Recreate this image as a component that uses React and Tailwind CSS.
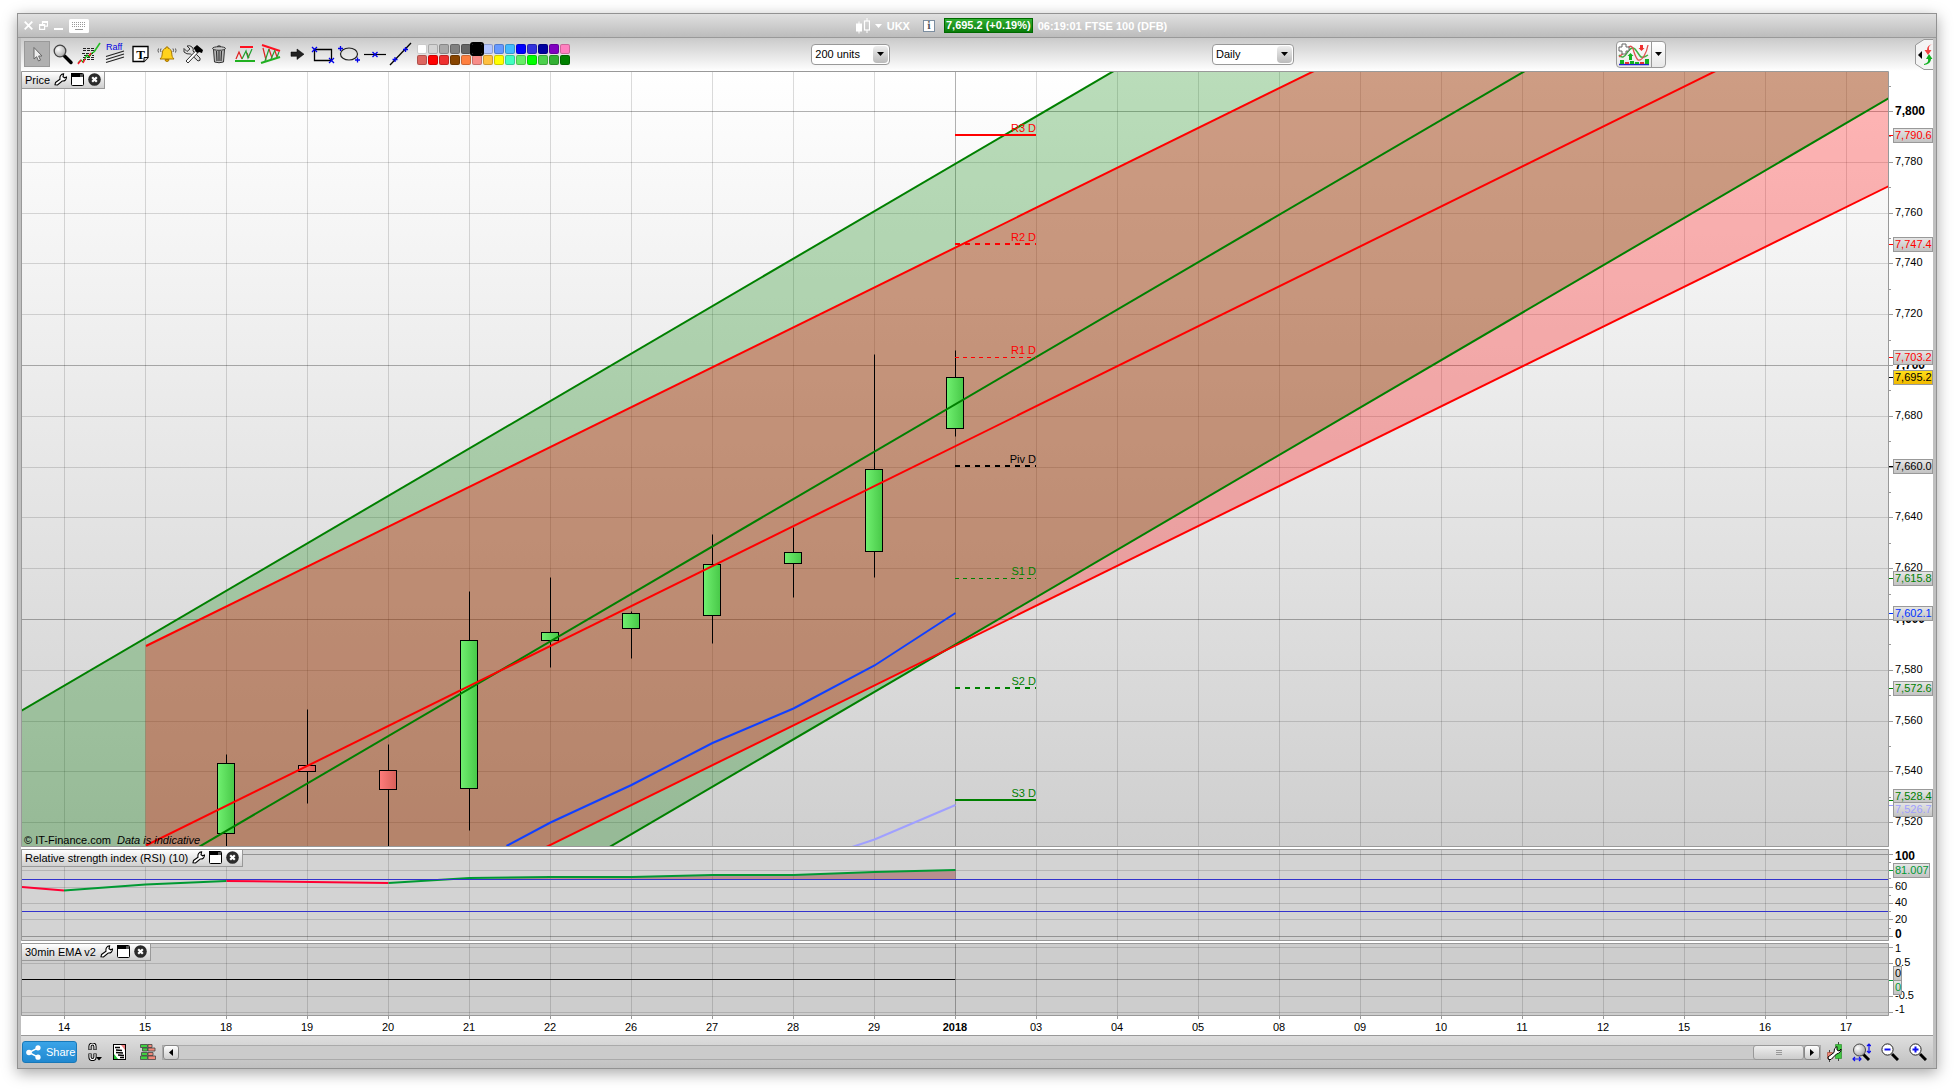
import { useState } from 'react';

const DAYS = ['14', '15', '18', '19', '20', '21', '22', '26', '27', '28', '29', '2018', '03', '04', '05', '08', '09', '10', '11', '12', '15', '16', '17'];

// [bar index, open/close top, open/close bottom, high, low, direction]
const CANDLES = [
  [2, 7543.2, 7515.6, 7547, 7500, 'up'],
  [3, 7542.4, 7540.1, 7564.7, 7527.4, 'down'],
  [4, 7540.4, 7533, 7550.9, 7500, 'down'],
  [5, 7591.7, 7533.4, 7611.1, 7516.8, 'up'],
  [6, 7594.8, 7591.7, 7616.7, 7581, 'up'],
  [7, 7602.3, 7596.4, 7603.3, 7584.8, 'up'],
  [8, 7621.6, 7601.5, 7633.6, 7590.7, 'up'],
  [9, 7626.3, 7622, 7636.3, 7608.8, 'up'],
  [10, 7659, 7626.7, 7704.4, 7616.7, 'up'],
  [11, 7695.2, 7675.1, 7706, 7672.1, 'up'],
];

const LEVELS = [
  { label: 'R3 D', y: 64, color: '#ff0000', width: 2 },
  { label: 'R2 D', y: 173, color: '#ff0000', width: 2, dash: '5 5' },
  { label: 'R1 D', y: 286.5, color: '#ff0000', width: 1, dash: '4 4' },
  { label: 'Piv D', y: 395, color: '#000000', width: 2, dash: '5 5' },
  { label: 'S1 D', y: 507.5, color: '#008000', width: 1, dash: '4 4' },
  { label: 'S2 D', y: 617, color: '#008000', width: 2, dash: '5 5' },
  { label: 'S3 D', y: 729, color: '#008000', width: 2 },
];

const PRICE_TAGS = [
  { text: '7,790.6', y: 64, color: '#ff0000' },
  { text: '7,747.4', y: 173, color: '#ff0000' },
  { text: '7,703.2', y: 286, color: '#ff0000' },
  { text: '7,695.2', y: 306, color: '#000000', fill: 'url(#tagGold)' },
  { text: '7,660.0', y: 395, color: '#000000' },
  { text: '7,615.8', y: 507, color: '#008000' },
  { text: '7,602.1', y: 542, color: '#0033ff' },
  { text: '7,572.6', y: 617, color: '#008000' },
  { text: '7,528.4', y: 725, tick: 729, color: '#008000' },
  { text: '7,526.7', y: 738, tick: 734, color: '#9f9fff' },
];

const SWATCHES = [
  ['#ffffff', '#d4d4d4', '#a9a9a9', '#808080', '#666666', '#000000', '#b3c6ff', '#6699ff', '#44bbff', '#0000ff', '#3333dd', '#0000a0', '#8000c0', '#ff80c0'],
  ['#dd6660', '#ff0000', '#ee3030', '#884400', '#ff8040', '#f88c88', '#ffc040', '#ffff00', '#40ffc0', '#66ee66', '#00ff00', '#4cd04c', '#33b033', '#008000'],
];

const W = 1912;
const PLOT_R = 1867.5;
const bx = (i) => 43.5 + i * 81;
const py = (p) => Math.floor(40.5 + (7800 - p) * 2.54) + 0.5;
const rsiY = (v) => Math.floor(87.3 - v * 0.82) + 0.5;

const GRID = 'rgba(0,0,0,0.14)';
const GRID_MAJOR = 'rgba(0,0,0,0.3)';
const GRID_PRICES = Array.from({ length: 15 }, (_, i) => 7800 - i * 20);

function VerticalGrid({ height }) {
  return DAYS.map((d, i) => (
    <line key={i} x1={bx(i)} x2={bx(i)} y1="0" y2={height} stroke={d === '2018' ? GRID_MAJOR : GRID} />
  ));
}

function Tag({ text, y, tick = y, color, fill = 'url(#tagGray)', width = 39 }) {
  return (
    <g>
      <line x1="1868" x2="1872" y1={tick + 0.5} y2={tick + 0.5} stroke={color} />
      <rect x="1872.5" y={y - 6.5} width={width} height="14" fill={fill} stroke="#999" />
      <text x="1874" y={y + 4} fill={color}>{text}</text>
    </g>
  );
}

function Frame({ height }) {
  return <path d={`M0.5 ${height - 0.5}V0.5H${PLOT_R}V${height - 0.5}Z`} fill="none" stroke="#999" />;
}

function PanelHeader({ title }) {
  return (
    <div className="absolute left-px top-px flex h-[17px] items-center gap-1 border-b border-r border-[#999] bg-gradient-to-b from-white to-[#cfcfcf] px-[3px] pb-px">
      <span className="leading-4">{title}</span>
      <button aria-label={`Configure ${title}`}>
        <svg width="13" height="13" viewBox="0 0 13 13">
          <path d="M1.5 9.5 6 6.2C5.5 3.5 7 1 9.6.8L9 3.8l1.6 1L12.5 4C12.5 7 10.5 8.3 8.2 8L3.5 12 1 11.8Z" fill="#fff" stroke="#000" strokeWidth="1.1" />
        </svg>
      </button>
      <button aria-label={`Detach ${title}`}>
        <svg width="13" height="13" viewBox="0 0 13 13">
          <rect x=".5" y=".5" width="12" height="12" rx="1" fill="#fff" stroke="#000" />
          <rect x="0" y="0" width="9" height="4" fill="#000" />
          <rect x="9" y="1" width="3" height="3" fill="#555" />
        </svg>
      </button>
      <button aria-label={`Close ${title}`}>
        <svg width="13" height="13" viewBox="0 0 13 13">
          <circle cx="6.5" cy="6.5" r="6.3" fill="#2b2b2b" />
          <path d="M4.2 4.2l4.6 4.6M8.8 4.2l-4.6 4.6" stroke="#fff" strokeWidth="2.2" />
        </svg>
      </button>
    </div>
  );
}

function PriceChart() {
  return (
    <svg viewBox={`0 0 ${W} 776`} className="block h-auto w-full overflow-visible" role="img" aria-label="FTSE 100 daily price">
      <defs>
        <linearGradient id="plotBg" x1="0" y1="0" x2="0" y2="1">
          <stop offset="0" stopColor="#ffffff" />
          <stop offset="1" stopColor="#cfcfcf" />
        </linearGradient>
        <linearGradient id="tagGray" x1="0" y1="0" x2="0" y2="1">
          <stop offset="0" stopColor="#e6e6e6" />
          <stop offset="1" stopColor="#c2c2c2" />
        </linearGradient>
        <linearGradient id="tagGold" x1="0" y1="0" x2="0" y2="1">
          <stop offset="0" stopColor="#ffe01a" />
          <stop offset="1" stopColor="#f0b800" />
        </linearGradient>
        <linearGradient id="candleUp">
          <stop offset="0" stopColor="#70f070" />
          <stop offset="1" stopColor="#48c848" />
        </linearGradient>
        <linearGradient id="candleDown">
          <stop offset="0" stopColor="#ff7c7c" />
          <stop offset="1" stopColor="#d86058" />
        </linearGradient>
        <clipPath id="plotClip">
          <rect x="1" y="1" width="1866" height="774" />
        </clipPath>
      </defs>
      <rect width="1868" height="776" fill="url(#plotBg)" />
      <g clipPath="url(#plotClip)">
        <VerticalGrid height={775} />
        {GRID_PRICES.map((p) => (
          <line key={p} x1="0" x2="1867" y1={py(p)} y2={py(p)} stroke={p % 100 === 0 ? GRID_MAJOR : GRID} />
        ))}

        {/* regression channels */}
        <polygon points="0,640 1868,-454 1868,27 0,1120.5" fill="rgba(0,128,0,0.27)" />
        <polygon points="124.5,575 1868,-283 1868,115 124.5,973" fill="rgba(255,0,0,0.29)" />

        {CANDLES.map(([i, top, bottom, high, low, dir]) => (
          <g key={i} stroke="#000">
            <line x1={bx(i)} x2={bx(i)} y1={py(high)} y2={py(low)} />
            <rect x={bx(i) - 9} y={py(top)} width="17" height={py(bottom) - py(top)} fill={dir === 'up' ? 'url(#candleUp)' : 'url(#candleDown)'} shapeRendering="crispEdges" />
          </g>
        ))}

        <g fill="none" strokeWidth="2">
          <polyline points="485.5,775 529.5,751.5 610.5,714 691.5,672 772.5,637.5 853.5,594.5 934.5,542" stroke="#1040ff" />
          <polyline points="828,777 853.5,768.5 934.5,734" stroke="#a0a0ff" />
          <g stroke="#008000">
            <line x1="0" y1="640" x2="1868" y2="-454" />
            <line x1="0" y1="880" x2="1868" y2="-213" />
            <line x1="0" y1="1120.5" x2="1868" y2="27" />
          </g>
          <g stroke="#ff0000">
            <line x1="125" y1="575" x2="1868" y2="-283" />
            <line x1="125" y1="774.5" x2="1868" y2="-85.5" />
            <line x1="125" y1="973" x2="1868" y2="115" />
          </g>
        </g>

        {LEVELS.map((l) => (
          <g key={l.label}>
            <line x1="934" x2="1015" y1={l.y} y2={l.y} stroke={l.color} strokeWidth={l.width} strokeDasharray={l.dash} />
            <text x="1015" y={Math.floor(l.y) - 3} fill={l.color} textAnchor="end">{l.label}</text>
          </g>
        ))}
        <text x="3" y="773">© IT-Finance.com</text>
        <text x="96" y="773" fontStyle="italic">Data is indicative</text>
      </g>
      <Frame height={776} />

      {/* price axis */}
      {Array.from({ length: 30 }, (_, i) => 7810 - i * 10).map((p) => (
        <line key={p} x1="1868" x2={p % 20 === 0 ? 1872 : 1870} y1={py(p)} y2={py(p)} stroke="#999" />
      ))}
      {/* 7,660 sits fully behind the pivot tag */}
      {GRID_PRICES.filter((p) => p !== 7660).map((p) => (
        <text key={p} x="1874" y={py(p) + (p % 100 === 0 ? 3.5 : 2.5)} fontWeight={p % 100 === 0 ? 700 : 400} fontSize={p % 100 === 0 ? 12 : 11}>
          {p.toLocaleString('en-US')}
        </text>
      ))}
      {PRICE_TAGS.map((t) => <Tag key={t.text} {...t} />)}
    </svg>
  );
}

function RsiChart() {
  return (
    <svg viewBox={`0 0 ${W} 92`} className="block h-auto w-full overflow-visible" role="img" aria-label="Relative strength index">
      <rect width="1868" height="92" fill="#d3d3d3" />
      <VerticalGrid height={91} />
      {[0, 20, 40, 60, 80, 100].map((v) => (
        <line key={v} x1="0" x2="1867" y1={rsiY(v)} y2={rsiY(v)} stroke={v % 100 === 0 ? GRID_MAJOR : GRID} />
      ))}
      <polygon points="448,30 529.5,28 610.5,28 691.5,26 772.5,26 853.5,23 934.5,21 934.5,30" fill="rgba(150,60,60,0.45)" />
      <g fill="none" strokeWidth="2">
        <polyline points="1,38 43,41.5" stroke="#ff0033" />
        <polyline points="43,41.5 124.5,35.5 205.5,32" stroke="#009933" />
        <polyline points="205.5,32 367.5,34" stroke="#ff0033" />
        <polyline points="367.5,34 448.5,29 529.5,28 610.5,28 691.5,26 772.5,26 853.5,23 934.5,21" stroke="#009933" />
      </g>
      <line x1="0" x2="1867" y1="30.5" y2="30.5" stroke="#3333cc" />
      <line x1="0" x2="1867" y1="62.5" y2="62.5" stroke="#3333cc" />
      <Frame height={92} />
      {Array.from({ length: 11 }, (_, i) => i * 10).map((v) => (
        <line key={v} x1="1868" x2={v % 20 === 0 ? 1872 : 1870} y1={rsiY(v)} y2={rsiY(v)} stroke="#999" />
      ))}
      <text x="1874" y="11" fontWeight="700" fontSize="12">100</text>
      <text x="1874" y="41">60</text>
      <text x="1874" y="57">40</text>
      <text x="1874" y="74">20</text>
      <text x="1874" y="89" fontWeight="700" fontSize="12">0</text>
      <Tag text="81.007" y={21} color="#009933" width={36} />
    </svg>
  );
}

function EmaChart() {
  return (
    <svg viewBox={`0 0 ${W} 73`} className="block h-auto w-full overflow-visible" role="img" aria-label="30min EMA">
      <rect width="1868" height="73" fill="#cdcdcd" />
      <VerticalGrid height={72} />
      {[4.5, 20.5, 53.5, 69.5].map((y) => <line key={y} x1="0" x2="1867" y1={y} y2={y} stroke={GRID} />)}
      <line x1="0" x2="1867" y1="36.5" y2="36.5" stroke={GRID_MAJOR} />
      <line x1="0" x2="934" y1="36.5" y2="36.5" stroke="#000" />
      <Frame height={73} />
      {[4.5, 20.5, 53.5, 69.5].map((y) => <line key={y} x1="1868" x2="1872" y1={y} y2={y} stroke="#999" />)}
      <text x="1874" y="9">1</text>
      <text x="1874" y="23">0.5</text>
      <text x="1874" y="56">-0.5</text>
      <text x="1874" y="70">-1</text>
      <Tag text="0" y={30} tick={37} color="#000" width={8} />
      <Tag text="0" y={44} tick={37} color="#009933" width={8} />
    </svg>
  );
}

function TimeAxis() {
  return (
    <svg viewBox={`0 0 ${W} 19`} className="block h-auto w-full" role="img" aria-label="Dates">
      {DAYS.map((d, i) => (
        <g key={i}>
          <line x1={bx(i)} x2={bx(i)} y1="0" y2="3" stroke="#999" />
          <text x={bx(i) - 0.5} y="15" textAnchor="middle" fontWeight={d === '2018' ? 700 : 400}>{d}</text>
        </g>
      ))}
    </svg>
  );
}

// Drawing tools, each in a 24x24 box
const TOOLS = [
  { name: 'Pointer', art: (
    <path d="M9 5.5V17l2.6-2.3L13.5 19l2-.9-1.9-4.1H17Z" fill="#eee" stroke="#666" />
  ) },
  { name: 'Zoom', art: (
    <g>
      <path d="M13.5 14 20 20.500" stroke="#000" strokeWidth="3.5" strokeLinecap="round" />
      <circle cx="9" cy="9" r="5.8" fill="url(#lens)" stroke="#444" strokeWidth="1.3" />
    </g>
  ) },
  { name: 'Price objects', art: (
    <g fill="none">
      <path d="M6 6.500h12M6 8.500h12M5 11.500h11M7 13.500h10M6 15.500h12M6 17.500h12" stroke="#222" strokeDasharray="3 1" />
      <path d="M1 21l3-3 2 2 4-7 2 2 3-4 2-1" stroke="#00b000" strokeWidth="1.2" />
      <path d="M1 22l3-4M6 21l2-4M12 14l2-3" stroke="#ff1030" strokeWidth="1.5" />
      <path d="M17 10 23 1" stroke="#22bb22" strokeWidth="1.5" />
    </g>
  ) },
  { name: 'Raff channel', art: (
    <g>
      <text x="3" y="8" fontSize="9" fill="#0000e0">Raff</text>
      <path d="M3 14.5 21 9M3 17.5 21 12M3 20.5 21 15" stroke="#222" strokeWidth="1.2" />
    </g>
  ) },
  { name: 'Text', art: (
    <g>
      <path d="M4 4.5h15v11l-4 4H4Z" fill="#fff" stroke="#000" strokeWidth="1.3" />
      <path d="M19 15.5h-4v4" fill="#ccc" stroke="#000" />
      <text x="11.5" y="16.5" fontSize="13" fontWeight="700" textAnchor="middle" fontFamily="Liberation Serif, serif">T</text>
    </g>
  ) },
  { name: 'Alert', art: (
    <g>
      <path d="M5 17c2-2 2-3 2.3-6C7.6 8 9 6.500 11 6.200V5h2v1.200c2 .3 3.400 1.800 3.700 4.800.3 3 .3 4 2.300 6Z" fill="#ffd21c" stroke="#a87800" />
      <path d="M10 17.5a2 2 0 0 0 4 0Z" fill="#e8a800" stroke="#a87800" />
      <path d="M3.5 6.5Q2.5 8.5 3.5 10.5M6 6.5q-1 2 0 3.5M20.5 6.5q1 2 0 4M18 6.5q1 2 0 3.5" fill="none" stroke="#555" />
    </g>
  ) },
  { name: 'Settings', art: (
    <g>
      <path d="M3 6.5 6 9.5 9 7 6 4q3-1 5 1t1 4l7 7q1 3-2 3L9.5 12Q5.5 12.5 3 10Z" fill="#ddd" stroke="#333" />
      <path d="M5 19 15 8.5l2 2L7 21Z" fill="#fff" stroke="#333" />
      <path d="M12.5 6 16 3l6 5-1 3-3-1-2 1Z" fill="#000" />
    </g>
  ) },
  { name: 'Delete', art: (
    <g>
      <path d="M6.5 7.5h11L16.5 20q-4.5 1.5-9 0Z" fill="#bbb" stroke="#333" />
      <path d="M9.5 9l.5 10M12 9v10M14.5 9 14 19" stroke="#333" strokeWidth="1.2" />
      <ellipse cx="12" cy="6.5" rx="6.5" ry="1.8" fill="#ccc" stroke="#333" />
      <path d="M10 4.5q2-1.5 4 0" fill="none" stroke="#333" />
    </g>
  ) },
  { name: 'Horizontal pattern', art: (
    <g fill="none">
      <path d="M7 5h13" stroke="#ff1020" strokeWidth="2" />
      <path d="M2 19h20" stroke="#20b020" strokeWidth="2" />
      <path d="M3 17l3-7 3 7M14 11l2 5" stroke="#e02020" strokeWidth="1.2" />
      <path d="M9 17l4-8 2 7 4-9" stroke="#20a030" strokeWidth="1.2" />
    </g>
  ) },
  { name: 'Triangle pattern', art: (
    <g fill="none">
      <path d="M3 3 21 9" stroke="#ff1020" strokeWidth="2" />
      <path d="M2 21 21 15" stroke="#20b020" strokeWidth="2" />
      <path d="M4 6l3 12M10 7l3 9M16 9l2 6" stroke="#e02020" strokeWidth="1.2" />
      <path d="M6 19 10 7M12 17l4-9M18 15l2-5" stroke="#20a030" strokeWidth="1.2" />
    </g>
  ) },
  { name: 'Arrow', art: (
    <path d="M6 10h6V7l7 5.2-7 5.3v-3.2H6Z" fill="#222" stroke="#000" strokeWidth=".5" />
  ) },
  { name: 'Rectangle', art: (
    <g fill="none">
      <path d="M3.5 7.5h17v11h-17Z" stroke="#000" strokeWidth="1.3" />
      <path d="M1 5l5 5M6 5l-5 5M18 16l5 5M23 16l-5 5" stroke="#0000e8" strokeWidth="1.3" />
    </g>
  ) },
  { name: 'Ellipse', art: (
    <g fill="none">
      <ellipse cx="12" cy="12" rx="8.5" ry="6" stroke="#222" strokeWidth="1.2" />
      <path d="M3.5 4v5M1 6.5h5M20.5 15.5v5M18 18h5" stroke="#0000e8" strokeWidth="1.3" />
    </g>
  ) },
  { name: 'Horizontal line', art: (
    <g fill="none">
      <path d="M1 12.5h22" stroke="#000" strokeWidth="1.2" />
      <path d="M9.5 10l5 5M14.5 10l-5 5" stroke="#0000e8" strokeWidth="1.3" />
    </g>
  ) },
  { name: 'Line', art: (
    <g fill="none">
      <path d="M1 23 22 1" stroke="#000" strokeWidth="1.3" />
      <path d="M3.5 17.5h5M6 15v5M14 7.5h5M16.5 5v5" stroke="#0000e8" strokeWidth="1.3" />
    </g>
  ) },
];

function Dropdown({ label, options, wide }) {
  return (
    <div className={wide ? 'relative w-[82px]' : 'relative w-[79px]'}>
      <select aria-label={label} className="block h-[21px] w-full appearance-none rounded border border-[#999] bg-white pl-[3px]">
        {options.map((o) => <option key={o}>{o}</option>)}
      </select>
      <span className="pointer-events-none absolute inset-y-[2px] right-[2px] flex w-[15px] items-center justify-center rounded-sm bg-gradient-to-b from-[#eee] to-[#bbb]">
        <svg width="7" height="4" viewBox="0 0 7 4"><path d="M0 0h7L3.5 4Z" /></svg>
      </span>
    </div>
  );
}

function TitleBar() {
  return (
    <header className="flex h-[24px] items-center border-b border-[#999] bg-gradient-to-b from-[#e0e0e0] to-[#bcbcbc] text-white">
      <div className="flex items-center gap-[6px] pl-[6px]">
        <button aria-label="Close window">
          <svg width="9" height="9" viewBox="0 0 9 9"><path d="M.7.7l7.600 7.600M8.300.7.7 8.300" stroke="#fff" strokeWidth="1.8" /></svg>
        </button>
        <button aria-label="Restore window">
          <svg width="9" height="9" viewBox="0 0 9 9" fill="none" stroke="#fff" strokeWidth="1.2"><path d="M3.5 3V.6h5v4.500H6M3.5 1.500h5M.6 3.600h5v4.800h-5ZM.6 4.500h5" /></svg>
        </button>
        <button aria-label="Minimise window">
          <svg width="9" height="9" viewBox="0 0 9 9"><path d="M0 8h9" stroke="#fff" strokeWidth="2" /></svg>
        </button>
        <button aria-label="Keyboard">
          <svg width="20" height="14" viewBox="0 0 20 14">
            <rect width="20" height="14" rx="1.5" fill="#fff" />
            <path d="M3 3.5h14M3 5.5h14M3 7.5h14" stroke="#999" strokeDasharray="1 1" />
            <path d="M6 10.5h8" stroke="#999" />
          </svg>
        </button>
      </div>
      <div className="flex flex-1 items-center justify-center pr-[2px] font-bold">
        <svg width="14" height="16" viewBox="0 0 14 16" fill="none" stroke="#fff">
          <path d="M3 3.5v12M11 0v3M11 12v3" />
          <rect x="0" y="5.5" width="6" height="8" fill="#fff" stroke="none" />
          <rect x="8.5" y="3" width="5" height="9" strokeWidth="1.2" />
        </svg>
        <svg className="mx-[5px]" width="7" height="4" viewBox="0 0 7 4"><path d="M0 0h7L3.5 4Z" fill="#fff" /></svg>
        <h1>UKX</h1>
        <button aria-label="Instrument information" className="ml-[13px] flex h-3 w-3 items-center justify-center border border-[#7c8ea0] bg-white font-serif text-[11px] leading-none text-[#555]">i</button>
        <span className="ml-[9px] h-[15px] border border-[#006800] bg-gradient-to-b from-[#30b030] to-[#087c08] px-px leading-[13px]">7,695.2 (+0.19%)</span>
        <span className="ml-[5px]">06:19:01 FTSE 100 (DFB)</span>
      </div>
    </header>
  );
}

function Toolbar() {
  const [tool, setTool] = useState('Pointer');
  const [color, setColor] = useState('#000000');
  return (
    <div className="flex h-[33px] items-center bg-gradient-to-b from-[#cacaca] to-white pb-px">
      <div className="flex items-center pl-[3px]">
        {TOOLS.map((t) => (
          <button key={t.name} aria-label={t.name} onClick={() => setTool(t.name)}
            className={t.name === tool ? 'flex h-[26px] w-[26px] items-center justify-center border border-[#999] bg-[#b0b0b0]' : 'flex h-[26px] w-[26px] items-center justify-center'}>
            <svg width="24" height="24" viewBox="0 0 24 24" className="shrink-0 overflow-visible">{t.art}</svg>
          </button>
        ))}
      </div>
      <div className="ml-[3px] grid grid-cols-14 gap-px">
        {SWATCHES.flat().map((c) => (
          <button key={c} aria-label={`Colour ${c}`} onClick={() => setColor(c)} style={{ backgroundColor: c }}
            className={c === color ? 'z-10 h-[10px] w-[10px] rounded-[1px] outline-2 outline-black' : 'h-[10px] w-[10px] rounded-[2px] border border-black/20'} />
        ))}
      </div>
      <div className="grow-[30]" />
      <Dropdown label="Number of units" options={['200 units', '500 units']} />
      <div className="grow-[40]" />
      <Dropdown label="Timeframe" options={['Daily', 'Weekly']} wide />
      <div className="grow-[40]" />
      <div className="flex h-[27px] w-[50px] rounded border border-[#999] bg-gradient-to-b from-white to-[#e8e8e8]">
        <button aria-label="Add indicator" className="flex w-[35px] items-center justify-center border-r border-[#999]">
          <svg width="31" height="23" viewBox="0 0 31 23" fill="none">
            <path d="M1 12Q5 17 9 10T17 6q3 4 5 7t8-1" stroke="#40b040" strokeWidth="1.5" />
            <path d="M1 14Q6 10 10 5t6 4q2 6 4 8 3 1 6-4t4-11" stroke="#e05050" strokeWidth="1.3" />
            <path d="M4 1h4v3h3v4H8v3H4V8H1V4h3Z" fill="#fff" stroke="#666" />
            <path d="M22 2h3v3h1.5l-3 3-3-3H22Z" fill="#f03030" />
            <path d="M11 17v-4H9.5L12.5 10l3 3H14v4Z" fill="#10b020" />
            <path d="M1 21.5h30" stroke="#2020d0" strokeWidth="1.5" />
            <path d="M2 21v-4h4v4ZM12 21v-3h4v3ZM17 21v-2h4v2ZM27 21v-5h4v5Z" fill="#10b020" />
            <path d="M7 21v-2h4v2ZM22 21v-2h4v2Z" fill="#e03030" />
          </svg>
        </button>
        <button aria-label="Indicator list" className="flex flex-1 items-center justify-center">
          <svg width="7" height="4" viewBox="0 0 7 4"><path d="M0 0h7L3.5 4Z" /></svg>
        </button>
      </div>
      <div className="grow-[31]" />
      <button aria-label="Open order panel">
        <svg width="18" height="31" viewBox="0 0 18 31" className="block">
          <path d="M18 .5H9L.5 6v19L9 30.5h9" fill="#f4f4f4" stroke="#999" />
          <path d="M7 12v8l-4-4Z" fill="#000" />
          <path d="M18 5q-5 1-4 6h2.500L13 16l-3.500-5H12q0-5 6-6Z" fill="#f04040" />
          <path d="M9 25q5-1 4-5h-2l3-5 3.500 5H16q0 5-7 6Z" fill="#10b020" />
        </svg>
      </button>
    </div>
  );
}

function BottomBar() {
  return (
    <footer className="flex h-[33px] items-center border-t border-[#999] bg-gradient-to-b from-[#dedede] to-[#c0c0c0] pl-px pr-[6px]">
      <button className="flex h-[22px] w-[55px] items-center gap-[5px] rounded-[3px] border border-[#1878b8] bg-gradient-to-b from-[#3aa4e8] to-[#2088d0] pl-[3px] text-white">
        <svg width="15" height="15" viewBox="0 0 15 15" fill="#fff">
          <path d="M12 2.8 3 7.5l9 4.7" fill="none" stroke="#fff" strokeWidth="1.5" />
          <circle cx="12" cy="2.8" r="2.6" /><circle cx="3" cy="7.5" r="2.8" /><circle cx="12" cy="12.2" r="2.6" />
        </svg>
        Share
      </button>
      <button aria-label="Link windows" className="ml-[10px]">
        <svg width="15" height="18" viewBox="0 0 15 18" fill="none">
          <path d="M3 7V3.500a2.500 2.500 0 0 1 5 0V7M3 10.500v3.500a2.500 2.500 0 0 0 5 0V10.500" stroke="#000" strokeWidth="3.200" />
          <path d="M3 6.500V3.500a2.500 2.500 0 0 1 5 0V6.500M3 11v3a2.500 2.500 0 0 0 5 0V11" stroke="#fff" strokeWidth="1.2" />
          <path d="M9 14h6l-3 3.500Z" fill="#000" />
        </svg>
      </button>
      <button aria-label="Trading list" className="ml-[11px]">
        <svg width="13" height="16" viewBox="0 0 13 16">
          <rect x=".5" y=".5" width="12" height="15" fill="#fff" stroke="#000" />
          <path d="M8 1h4v5Z" fill="#f08080" /><path d="M1 10v5h4Z" fill="#20c030" />
          <path d="M2 3.5h5M3 6l6 .5M3 8.5l7 .5M5 11l6 .5M7 13.5h4" stroke="#000" strokeWidth="1.5" />
        </svg>
      </button>
      <button aria-label="Order book" className="ml-[14px]">
        <svg width="16" height="16" viewBox="0 0 16 16" stroke="#444" strokeWidth=".8">
          <path d="M.5.5h7v3h-7ZM2.5 4h5v3h-5ZM1.5 8.5h6v3h-6ZM.5 12h7v3.5h-7Z" fill="#40d040" />
          <path d="M8 .5h4v3H8ZM8 4h7v3H8ZM8 8.5h5v3H8ZM8 12h7.5v3.5H8Z" fill="#f08878" />
        </svg>
      </button>
      <div className="ml-[6px] flex h-[15px] flex-1 items-center justify-between border border-[#aaa] bg-[#cbcbcb]">
        <button aria-label="Scroll left" className="flex h-[15px] w-4 items-center justify-center rounded-[3px] border border-[#888] bg-gradient-to-b from-white to-[#ccc]">
          <svg width="4" height="7" viewBox="0 0 4 7"><path d="M4 0v7L0 3.5Z" /></svg>
        </button>
        <div className="flex">
          <div className="flex h-[15px] w-[51px] flex-col items-center justify-center gap-px rounded-[3px] border border-[#999] bg-gradient-to-b from-[#eee] to-[#ccc]">
            <span className="h-px w-[6px] bg-[#999]" />
            <span className="h-px w-[6px] bg-[#999]" />
            <span className="h-px w-[6px] bg-[#999]" />
          </div>
          <button aria-label="Scroll right" className="flex h-[15px] w-4 items-center justify-center rounded-[3px] border border-[#888] bg-gradient-to-b from-white to-[#ccc]">
            <svg width="4" height="7" viewBox="0 0 4 7"><path d="M0 0v7l4-3.5Z" /></svg>
          </button>
        </div>
      </div>
      <div className="ml-[6px] flex items-center gap-[10px]">
        <button aria-label="Chart settings">
          <svg width="15" height="20" viewBox="0 0 15 20">
            <path d="M2.5 8v12M11.5 0v19" stroke="#444" />
            <path d="M.5 10.5h5v6h-5Z" fill="#f08878" stroke="#a04030" strokeWidth=".6" />
            <path d="M8.5 2.5h6v14h-6Z" fill="#40c840" stroke="#208020" strokeWidth=".6" />
            <path d="M1 15 7 10.5Q6.5 6 10 4.5V8l2 1 2-2q0 4-4.5 5L4 17.5H1.5Z" fill="#fff" stroke="#000" />
          </svg>
        </button>
        <button aria-label="Fit chart">
          <svg width="19" height="19" viewBox="0 0 19 19" fill="none">
            <path d="M11 11l6 6" stroke="#000" strokeWidth="3" />
            <circle cx="7.5" cy="7" r="6" fill="url(#lens)" stroke="#444" />
            <path d="M17 1v9M15 3l2-2 2 2M15 8l2 2 2-2M1 16h8M3 14l-2 2 2 2M7 14l2 2-2 2" stroke="#1010f0" strokeWidth="1.2" />
          </svg>
        </button>
        <button aria-label="Zoom out">
          <svg width="18" height="18" viewBox="0 0 18 18">
            <path d="M11 11l6 6" stroke="#000" strokeWidth="3" />
            <circle cx="6.5" cy="6.5" r="5.6" fill="#fff" stroke="#222" />
            <path d="M3.5 6.5h6" stroke="#1010f0" strokeWidth="2" />
          </svg>
        </button>
        <button aria-label="Zoom in">
          <svg width="18" height="18" viewBox="0 0 18 18">
            <path d="M11 11l6 6" stroke="#000" strokeWidth="3" />
            <circle cx="6.5" cy="6.5" r="5.6" fill="#fff" stroke="#222" />
            <path d="M3.5 6.5h6M6.5 3.5v6" stroke="#1010f0" strokeWidth="2" />
          </svg>
        </button>
      </div>
    </footer>
  );
}

export default function App() {
  return (
    <div className="min-h-screen bg-white px-[17px] pb-5 pt-[13px] font-['Liberation_Sans',Arial,sans-serif] text-[11px] leading-4 text-black">
      <svg width="0" height="0" className="absolute" aria-hidden="true">
        <defs>
          <radialGradient id="lens" cx=".35" cy=".35" r=".7">
            <stop offset="0" stopColor="#ffffff" />
            <stop offset="1" stopColor="#a8a8a8" />
          </radialGradient>
        </defs>
      </svg>
      <div className="border border-[#929292] bg-[#bfbfbf] shadow-[0_4px_14px_rgba(0,0,0,0.35)]">
        <TitleBar />
        <main className="mx-[3px] bg-white">
          <Toolbar />
          <div className="flex flex-col gap-[2px]">
            <section className="relative"><PriceChart /><PanelHeader title="Price" /></section>
            <section className="relative"><RsiChart /><PanelHeader title="Relative strength index (RSI) (10)" /></section>
            <section className="relative"><EmaChart /><PanelHeader title="30min EMA v2" /></section>
          </div>
          <TimeAxis />
        </main>
        <div className="mx-[3px]"><BottomBar /></div>
      </div>
    </div>
  );
}
